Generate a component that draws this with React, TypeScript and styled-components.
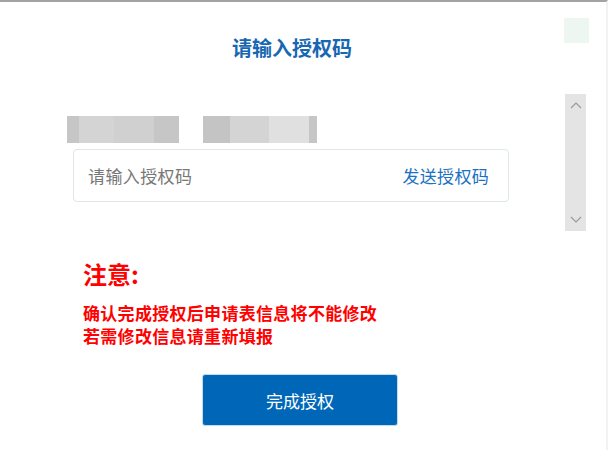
import styled, { createGlobalStyle } from 'styled-components'

const GlobalStyle = createGlobalStyle`
  html, body {
    margin: 0;
    padding: 0;
    background: #fff;
  }
  body {
    font-family: "Noto Sans CJK SC", "Noto Sans", sans-serif;
  }
`

const maskLeft = ['#c6c6c6 12px', '#d4d4d4 35px', '#d0d0d0 40px', '#c6c6c6 25px']
const maskRight = ['#c4c4c4 27px', '#d4d4d4 39px', '#e0e0e0 40px', '#c6c6c6 8px']

const App = () => {
  return (
    <>
      <GlobalStyle />
      <Page>
        <Main>
          <Title>请输入授权码</Title>
          <MaskRow>
            <Mask>
              {maskLeft.map((m, i) => {
                const [color, w] = m.split(' ')
                return <Segment key={i} color={color} width={w} />
              })}
            </Mask>
            <Mask>
              {maskRight.map((m, i) => {
                const [color, w] = m.split(' ')
                return <Segment key={i} color={color} width={w} />
              })}
            </Mask>
          </MaskRow>
          <InputBox>
            <CodeInput placeholder='请输入授权码' />
            <SendLink>发送授权码</SendLink>
          </InputBox>
          <Notice>
            <NoticeTitle>注意:</NoticeTitle>
            <NoticeText>
              确认完成授权后申请表信息将不能修改
              <br />
              若需修改信息请重新填报
            </NoticeText>
          </Notice>
          <ButtonRow>
            <Button>完成授权</Button>
          </ButtonRow>
        </Main>
        <Side>
          <Badge />
          <ScrollTrack>
            <svg width='12' height='7' viewBox='0 0 12 7'>
              <path d='M1 6 L6 1 L11 6' fill='none' stroke='#9a9a9a' strokeWidth='1.2' />
            </svg>
            <svg width='12' height='7' viewBox='0 0 12 7'>
              <path d='M1 1 L6 6 L11 1' fill='none' stroke='#9a9a9a' strokeWidth='1.2' />
            </svg>
          </ScrollTrack>
        </Side>
      </Page>
    </>
  )
}

export default App

const Page = styled.div`
  width: 608px;
  height: 450px;
  box-sizing: border-box;
  border-top: 2px solid #a3a3a3;
  border-right: 2px solid #f2f2f2;
  display: flex;
  overflow: hidden;
`

const Main = styled.div`
  width: 564px;
  display: flex;
  flex-direction: column;
`

const Title = styled.h2`
  margin: 0;
  padding: 33px 0 0 20px;
  height: 26px;
  line-height: 26px;
  text-align: center;
  font-size: 20px;
  font-weight: 700;
  color: #1767b2;
`

const MaskRow = styled.div`
  display: flex;
  gap: 24px;
  margin: 55px 0 0 67px;
`

const Mask = styled.div`
  display: flex;
  height: 27px;
`

const Segment = styled.div<{ color: string; width: string }>`
  width: ${({ width }) => width};
  background: ${({ color }) => color};
`

const InputBox = styled.div`
  margin: 6px 0 0 73px;
  width: 436px;
  height: 53px;
  box-sizing: border-box;
  border: 1px solid #dfe6e9;
  border-radius: 4px;
  display: flex;
  align-items: center;
  padding: 0 19px 0 14px;
`

const CodeInput = styled.input`
  flex: 1;
  border: none;
  outline: none;
  padding: 0;
  font-family: "Noto Sans CJK SC", sans-serif;
  font-size: 17px;
  letter-spacing: 0.4px;
  color: #333;
  background: transparent;
  &::placeholder {
    color: #777;
  }
`

const SendLink = styled.span`
  font-size: 17px;
  letter-spacing: 0.3px;
  color: #1c72c2;
  cursor: pointer;
`

const Notice = styled.div`
  margin: 59px 0 0 83px;
  color: #ff0000;
  font-weight: 700;
`

const NoticeTitle = styled.div`
  font-size: 24px;
  line-height: 26px;
`

const NoticeText = styled.div`
  margin-top: 14px;
  font-size: 17px;
  line-height: 23px;
  letter-spacing: 0.3px;
`

const ButtonRow = styled.div`
  display: flex;
  justify-content: center;
  padding-left: 36px;
  margin-top: 27px;
`

const Button = styled.button`
  width: 196px;
  height: 52px;
  background: #0067b8;
  border: 1px solid #c7d9ea;
  border-radius: 3px;
  color: #fff;
  font-family: "Noto Sans CJK SC", sans-serif;
  font-size: 17px;
  cursor: pointer;
`

const Side = styled.div`
  display: flex;
  flex-direction: column;
  padding-top: 16px;
`

const Badge = styled.div`
  width: 25px;
  height: 25px;
  background: #eef6f2;
`

const ScrollTrack = styled.div`
  margin: 51px 0 0 1px;
  width: 21px;
  height: 137px;
  background: #e4e4e4;
  display: flex;
  flex-direction: column;
  justify-content: space-between;
  align-items: center;
  padding: 8px 0;
  box-sizing: border-box;
`
